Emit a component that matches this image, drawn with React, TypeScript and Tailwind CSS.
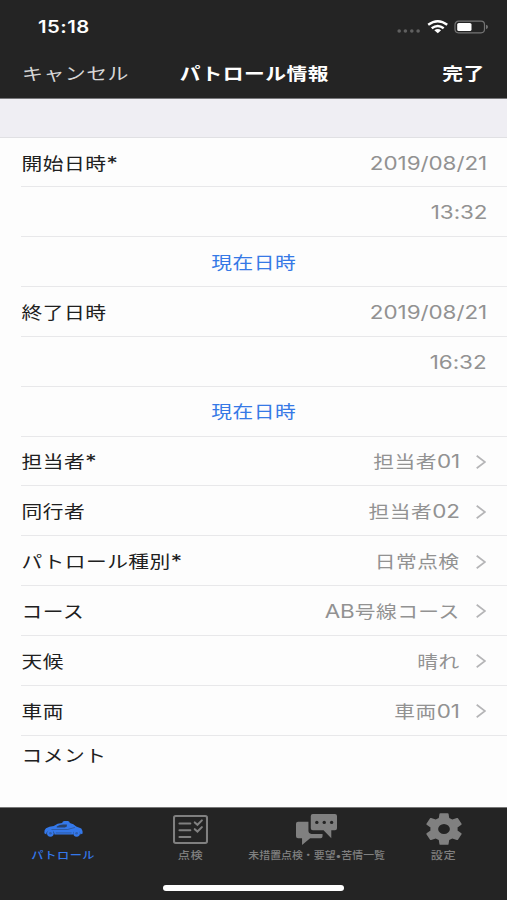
import React from 'react';
import { clsx } from 'clsx';

type Row = { label?: string; value?: string; action?: string; link?: boolean };

const rows: Row[] = [
  { label: '開始日時*', value: '2019/08/21' },
  { value: '13:32' },
  { action: '現在日時' },
  { label: '終了日時', value: '2019/08/21' },
  { value: '16:32' },
  { action: '現在日時' },
  { label: '担当者*', value: '担当者01', link: true },
  { label: '同行者', value: '担当者02', link: true },
  { label: 'パトロール種別*', value: '日常点検', link: true },
  { label: 'コース', value: 'AB号線コース', link: true },
  { label: '天候', value: '晴れ', link: true },
  { label: '車両', value: '車両01', link: true },
];

// Latin letters and digits are set slightly larger than the kana and kanji
const Mixed = ({ text = '' }: { text?: string }) => (
  <>
    {text.split(/([\x20-\x7e]+)/).filter(Boolean).map((part, i) =>
      /^[\x20-\x7e]/.test(part) ? <span key={i} className="text-[18.4px] leading-[0] tracking-[-0.05px]">{part}</span> : part
    )}
  </>
);

const CarIcon = () => (
  <svg width="39" height="16" viewBox="0 0 116 47" preserveAspectRatio="none" fill="currentColor">
    <path d="M54 6Q55 0 61 0H70Q76 0 77 6Q88 8 96 16L111 22Q115 27 115 37L108 40A11 11 0 0 0 86 40H31A12 12 0 0 0 7 40L1 36Q0 25 6 21Q15 16 29 15Q40 6 54 6Z" />
    <path d="M38 16Q46 10 57 10H68V16L62 19H38Z" fill="#242424" opacity=".65" />
    <path d="M22 25H70L92 19M35 35H82" stroke="#242424" strokeWidth="2" fill="none" opacity=".5" />
    <circle cx="19" cy="36" r="10" />
    <circle cx="97" cy="36" r="10" />
    <circle cx="19" cy="36" r="4" fill="#242424" opacity=".3" />
    <circle cx="97" cy="36" r="4" fill="#242424" opacity=".3" />
  </svg>
);

const ChecklistIcon = () => (
  <svg width="35" height="29" viewBox="0 0 103 86" preserveAspectRatio="none" fill="none" stroke="currentColor" strokeWidth="6" strokeLinecap="round">
    <rect x="3" y="3" width="97" height="80" rx="5" />
    <path d="M19 25H51M19 45H51M19 65H51" />
    <path d="M64 22L72 29L85 16M64 42L72 49L85 36" />
  </svg>
);

const ChatIcon = () => (
  <svg width="41" height="31" viewBox="0 0 122 92" preserveAspectRatio="none" fill="currentColor">
    <path d="M6 23H37V50Q37 59 46 59H79V66Q79 72 73 72H42L18 92V72H6Q0 72 0 66V29Q0 23 6 23Z" />
    <path d="M50 0H116Q122 0 122 6V42Q122 48 116 48H105V72L82 48H50Q44 48 44 42V6Q44 0 50 0Z" />
    <g fill="#242424">
      <circle cx="62" cy="25" r="5" />
      <circle cx="84" cy="25" r="5" />
      <circle cx="106" cy="25" r="5" />
    </g>
  </svg>
);

const GearIcon = () => (
  <svg width="36" height="32" viewBox="2.5 2.3 19 19.4" preserveAspectRatio="none" fill="currentColor" fillRule="evenodd">
    <path d="M19.14 12.94c.04-.3.06-.61.06-.94 0-.32-.02-.64-.07-.94l2.03-1.58c.18-.14.23-.41.12-.61l-1.92-3.32c-.12-.22-.37-.29-.59-.22l-2.39.96c-.5-.38-1.03-.7-1.62-.94l-.36-2.54c-.04-.24-.24-.41-.48-.41h-3.84c-.24 0-.43.17-.47.41l-.36 2.54c-.59.24-1.13.57-1.62.94l-2.39-.96c-.22-.08-.47 0-.59.22L2.74 8.87c-.12.21-.08.47.12.61l2.03 1.58c-.05.3-.09.63-.09.94s.02.64.07.94l-2.03 1.58c-.18.14-.23.41-.12.61l1.92 3.32c.12.22.37.29.59.22l2.39-.96c.5.38 1.03.7 1.62.94l.36 2.54c.05.24.24.41.48.41h3.84c.24 0 .44-.17.47-.41l.36-2.54c.59-.24 1.13-.56 1.62-.94l2.39.96c.22.08.47 0 .59-.22l1.92-3.32c.12-.22.07-.47-.12-.61zM12 15.1a3.1 3.1 0 1 1 0-6.2 3.1 3.1 0 0 1 0 6.2z" />
  </svg>
);

const tabs = [
  { label: 'パトロール', icon: <CarIcon />, active: true },
  { label: '点検', icon: <ChecklistIcon /> },
  { label: '未措置点検・要望•苦情一覧', icon: <ChatIcon />, tight: true },
  { label: '設定', icon: <GearIcon /> },
];

const StatusIcons = () => (
  <svg width="92" height="14" viewBox="0 0 92 14" fill="none">
    <g fill="#606060">
      <circle cx="3.2" cy="11" r="1.8" />
      <circle cx="9.4" cy="11" r="1.8" />
      <circle cx="15.8" cy="11" r="1.8" />
      <circle cx="22.1" cy="11" r="1.8" />
    </g>
    <g stroke="#fff" strokeWidth="2.4">
      <path d="M32.2 4.8Q41.8 -2.3 51.2 4.8" />
      <path d="M35.7 8.2Q41.8 3.6 47.7 8.2" />
    </g>
    <path d="M38.3 10.3Q41.8 7.7 45.1 10.3L41.8 13.2Z" fill="#fff" />
    <rect x="59" y="1.2" width="29.5" height="11.6" rx="3.5" stroke="#747474" strokeWidth="1.2" />
    <rect x="61.2" y="3" width="14.3" height="8" rx="1.6" fill="#fff" />
    <path d="M90 4.8Q92 5.4 92 7Q92 8.6 90 9.2Z" fill="#747474" />
  </svg>
);

const App = () => {
  return (
    <div className="flex h-[900px] w-[507px] flex-col overflow-hidden bg-[#fdfdfd] font-['Inter','Noto_Sans_CJK_JP',sans-serif] text-[17px] leading-none tracking-[0.4px] whitespace-nowrap">
      <header className="flex h-[98px] flex-col bg-[#242424] text-white">
        <div className="flex h-[53px] items-center justify-between pr-[19px] pl-[38px]">
          <span className="origin-left scale-x-[1.19] pt-[1px] text-[17px] font-semibold">15:18</span>
          <StatusIcons />
        </div>
        <div className="grid h-[43px] grid-cols-3 items-center px-[22px]">
          <span className="origin-left scale-x-[1.23] justify-self-start text-[#d6d6d6]">キャンセル</span>
          <span className="scale-x-[1.22] justify-self-center pl-[1px] font-bold">パトロール情報</span>
          <span className="origin-right scale-x-[1.22] justify-self-end font-bold">完了</span>
        </div>
      </header>

      <div className="h-[39.6px] border-y border-t-[#77777a] border-b-[#e0e0e3] bg-[#efeef3]" />

      <main className="flex-1 pl-[21px]">
        {rows.map((row, i) => (
          <div key={i} className="flex h-[49.83px] items-center justify-between border-b border-[#e8e8ea] pt-[3px] pr-5">
            {row.action ? (
              <button className="mx-auto scale-x-[1.22] pr-[1px] text-[#3679e6]">{row.action}</button>
            ) : (
              <>
                <span className="origin-left scale-x-[1.22] pt-[1px] pl-[0.5px] text-[#202020]"><Mixed text={row.label} /></span>
                <span className="flex items-center gap-[16px] text-[#929292]">
                  <span className="origin-right scale-x-[1.22] pt-[1px]"><Mixed text={row.value} /></span>
                  {row.link && (
                    <svg className="mr-[1px] mb-[1px]" width="10" height="14" viewBox="0 0 10 14" fill="none" stroke="#b5b5b7" strokeWidth="1.7">
                      <path d="M0.7 0.8L9 7L0.7 13.2" />
                    </svg>
                  )}
                </span>
              </>
            )}
          </div>
        ))}
        <div className="flex pt-[12px]">
          <span className="origin-left scale-x-[1.22] pl-[0.5px] text-[#202020]">コメント</span>
        </div>
      </main>

      <footer className="flex h-[93px] flex-col items-center border-t border-[#777] bg-[#242424]">
        <nav className="grid h-[77px] w-full grid-cols-4">
          {tabs.map((tab) => (
            <div key={tab.label} className={clsx('flex flex-col items-center', tab.active ? 'text-[#3478ea]' : 'text-[#808080]')}>
              <span className="flex h-[42px] items-center">{tab.icon}</span>
              <span className={clsx('text-[10px] font-medium', tab.tight ? 'scale-x-[1.09] tracking-normal' : 'scale-x-[1.22]')}>{tab.label}</span>
            </div>
          ))}
        </nav>
        <div className="h-[6px] w-[181px] rounded-full bg-white" />
      </footer>
    </div>
  );
};

export default App;
